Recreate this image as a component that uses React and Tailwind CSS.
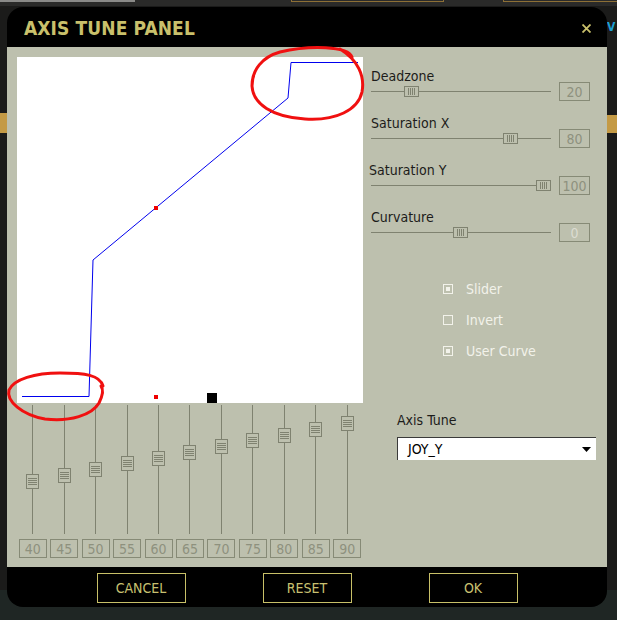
import React from "react";

const vSliders = [
  { v: 40, t: 69 },
  { v: 45, t: 63 },
  { v: 50, t: 57 },
  { v: 55, t: 51 },
  { v: 60, t: 46 },
  { v: 65, t: 40 },
  { v: 70, t: 34 },
  { v: 75, t: 28 },
  { v: 80, t: 23 },
  { v: 85, t: 17 },
  { v: 90, t: 11 },
];

const hSliders = [
  { label: "Deadzone", value: "20", left: 33, shift: false, light: false },
  { label: "Saturation X", value: "80", left: 132, shift: false, light: false },
  { label: "Saturation Y", value: "100", left: 165, shift: true, light: false },
  { label: "Curvature", value: "0", left: 82, shift: false, light: true },
];

const checks = [
  { label: "Slider", on: true },
  { label: "Invert", on: false },
  { label: "User Curve", on: true },
];

function VThumb({ top }) {
  return (
    <div
      className="absolute left-0 w-[13px] h-[15px] border border-[#7f8270] bg-[#bdc0ae] flex flex-col items-center justify-center gap-[1px]"
      style={{ top }}
    >
      <div className="w-[9px] h-px bg-[#7f8270]" />
      <div className="w-[9px] h-px bg-[#7f8270]" />
      <div className="w-[9px] h-px bg-[#7f8270]" />
      <div className="w-[9px] h-px bg-[#7f8270]" />
    </div>
  );
}

function HThumb({ left }) {
  return (
    <div
      className="absolute top-[1px] w-[15px] h-[11px] border border-[#7f8270] bg-[#bdc0ae] flex items-center justify-center gap-[1px]"
      style={{ left }}
    >
      <div className="w-px h-[7px] bg-[#7f8270]" />
      <div className="w-px h-[7px] bg-[#7f8270]" />
      <div className="w-px h-[7px] bg-[#7f8270]" />
      <div className="w-px h-[7px] bg-[#7f8270]" />
    </div>
  );
}

export default function App() {
  return (
    <div className="relative w-[617px] h-[620px] overflow-hidden bg-[#1b1b1a] pt-[7px] pl-[7px] font-['DejaVu_Sans_Condensed','DejaVu_Sans',sans-serif]">
      {/* background scene */}
      <div className="absolute top-0 left-0 w-[617px] h-[6px] bg-[#2a2a29]" />
      <div className="absolute top-0 left-0 w-[135px] h-[2px] bg-[#8a8a88]" />
      <div className="absolute top-[-10px] left-[291px] w-[153px] h-[12px] border border-[#8c6f36]" />
      <div className="absolute top-[-10px] left-[503px] w-[130px] h-[12px] border border-[#8c6f36]" />
      <div className="absolute top-[113px] left-0 w-[8px] h-[20px] bg-[#c49a45]" />
      <div className="absolute top-[115px] left-[606px] w-[12px] h-[18px] bg-[#c49a45]" />
      <div className="absolute top-[20px] left-[607px] w-[10px] overflow-hidden text-[12px] leading-[14px] font-bold text-[#1c9fd4]">V</div>
      <div className="absolute top-[590px] left-0 w-[617px] h-[30px] bg-[#1f2624]" />

      {/* dialog */}
      <div className="relative w-[600px] h-[600px] bg-black rounded-[16px] flex flex-col overflow-hidden">
        {/* header */}
        <div className="h-[40px] flex justify-between pl-[17px] pr-[16px] pt-[12px]">
          <div className="text-[19px] leading-[19px] font-bold text-[#c9c06b] tracking-[0.1px]">AXIS TUNE PANEL</div>
          <svg width="9" height="9" viewBox="0 0 9 9" className="mt-[5px]">
            <path d="M0.5 0.5 L8.5 8.5 M8.5 0.5 L0.5 8.5" stroke="#c9c06b" strokeWidth="1.8" />
          </svg>
        </div>

        {/* panel */}
        <div className="h-[520px] bg-[#bdc0ae] flex pl-[10px] pt-[10px]">
          {/* left column */}
          <div className="w-[346px] flex flex-col">
            <div className="relative w-[346px] h-[346px] bg-white">
              <svg width="346" height="346" viewBox="0 0 346 346" className="absolute inset-0">
                <polyline
                  points="5,339.5 72,339.5 76,203 271,41 274,5.5 341,5.5"
                  fill="none"
                  stroke="#0000ee"
                  strokeWidth="1"
                />
                <rect x="137" y="149" width="4" height="4" fill="#ee0000" />
                <rect x="137" y="338" width="4" height="4" fill="#ee0000" />
                <rect x="190" y="336" width="10" height="10" fill="#000" />
              </svg>
            </div>
            <div className="mt-[2px] grid grid-cols-11 w-[346px]">
              {vSliders.map((s) => (
                <div key={s.v} className="flex flex-col items-center">
                  <div className="relative w-[13px] h-[129px] flex justify-center">
                    <div className="w-px h-full bg-[#7f8270]" />
                    <VThumb top={s.t} />
                  </div>
                  <div className="mt-[5px] w-[28px] h-[19px] border border-[#868a76] flex items-center justify-center text-[14px] leading-[14px] text-[#8e917e]">
                    {s.v}
                  </div>
                </div>
              ))}
            </div>
          </div>

          {/* right column */}
          <div className="ml-[8px] w-[219px] pt-[12px] flex flex-col">
            {hSliders.map((s, i) => (
              <div key={s.label} className={i < hSliders.length - 1 ? "flex flex-col mb-[15px]" : "flex flex-col"}>
                <div
                  className={
                    s.shift
                      ? "-ml-[2px] h-[14px] leading-[14px] text-[14px] text-[#1c1c1a]"
                      : "h-[14px] leading-[14px] text-[14px] text-[#1c1c1a]"
                  }
                >
                  {s.label}
                </div>
                <div className="-mt-px h-[19px] flex items-center">
                  <div className="relative w-[180px] h-[13px] flex items-center">
                    <div className="w-full h-px bg-[#7f8270]" />
                    <HThumb left={s.left} />
                  </div>
                  <div
                    className={
                      s.light
                        ? "ml-[8px] w-[31px] h-[19px] border border-[#868a76] flex items-center justify-center text-[14px] leading-[14px] text-[#dcdcd2]"
                        : "ml-[8px] w-[31px] h-[19px] border border-[#868a76] flex items-center justify-center text-[14px] leading-[14px] text-[#8e917e]"
                    }
                  >
                    {s.value}
                  </div>
                </div>
              </div>
            ))}

            <div className="mt-[31px] flex flex-col">
              {checks.map((c) => (
                <div key={c.label} className="h-[31px] flex items-center pl-[72px]">
                  <div className="w-[10px] h-[10px] border border-[#f2f2ea] flex items-center justify-center">
                    {c.on && <div className="w-[4px] h-[4px] bg-[#f2f2ea]" />}
                  </div>
                  <div className="ml-[13px] text-[14px] leading-[14px] text-[#f2f2ea]">{c.label}</div>
                </div>
              ))}
            </div>

            <div className="ml-[26px] mt-[47px] h-[14px] leading-[14px] text-[14px] text-[#1c1c1a]">Axis Tune</div>
            <div className="ml-[26px] mt-[10px] w-[199px] h-[23px] shrink-0 bg-white border-t border-l border-[#3a3a3a] flex items-center justify-between pl-[10px] pr-[5px]">
              <span className="text-[14px] leading-[14px] text-black">JOY_Y</span>
              <svg width="9" height="5" viewBox="0 0 9 5">
                <path d="M0 0 L9 0 L4.5 5 Z" fill="#000" />
              </svg>
            </div>
          </div>
        </div>

        {/* footer */}
        <div className="h-[40px] flex justify-center gap-[77px] pt-[6px]">
          {["CANCEL", "RESET", "OK"].map((b) => (
            <div
              key={b}
              className="w-[89px] h-[30px] border border-[#c8c068] flex items-center justify-center text-[14px] leading-[14px] text-[#c8c070]"
            >
              {b}
            </div>
          ))}
        </div>
      </div>

      {/* hand-drawn red annotations */}
      <svg width="617" height="620" viewBox="0 0 617 620" className="absolute inset-0 pointer-events-none">
        <path
          d="M352,57 C348,46 310,45 280,52 C262,57 252,70 252,86 C253,104 272,117 305,119 C336,121 358,110 362,92 C365,76 358,60 340,49"
          fill="none"
          stroke="#f01010"
          strokeWidth="3"
          strokeLinecap="round"
        />
        <path
          d="M103,386 C100,375 85,373 60,373 C35,373 14,379 9,390 C6,401 22,415 45,419 C70,422 92,415 99,403 C103,395 104,390 101,386"
          fill="none"
          stroke="#f01010"
          strokeWidth="3"
          strokeLinecap="round"
        />
      </svg>
    </div>
  );
}
